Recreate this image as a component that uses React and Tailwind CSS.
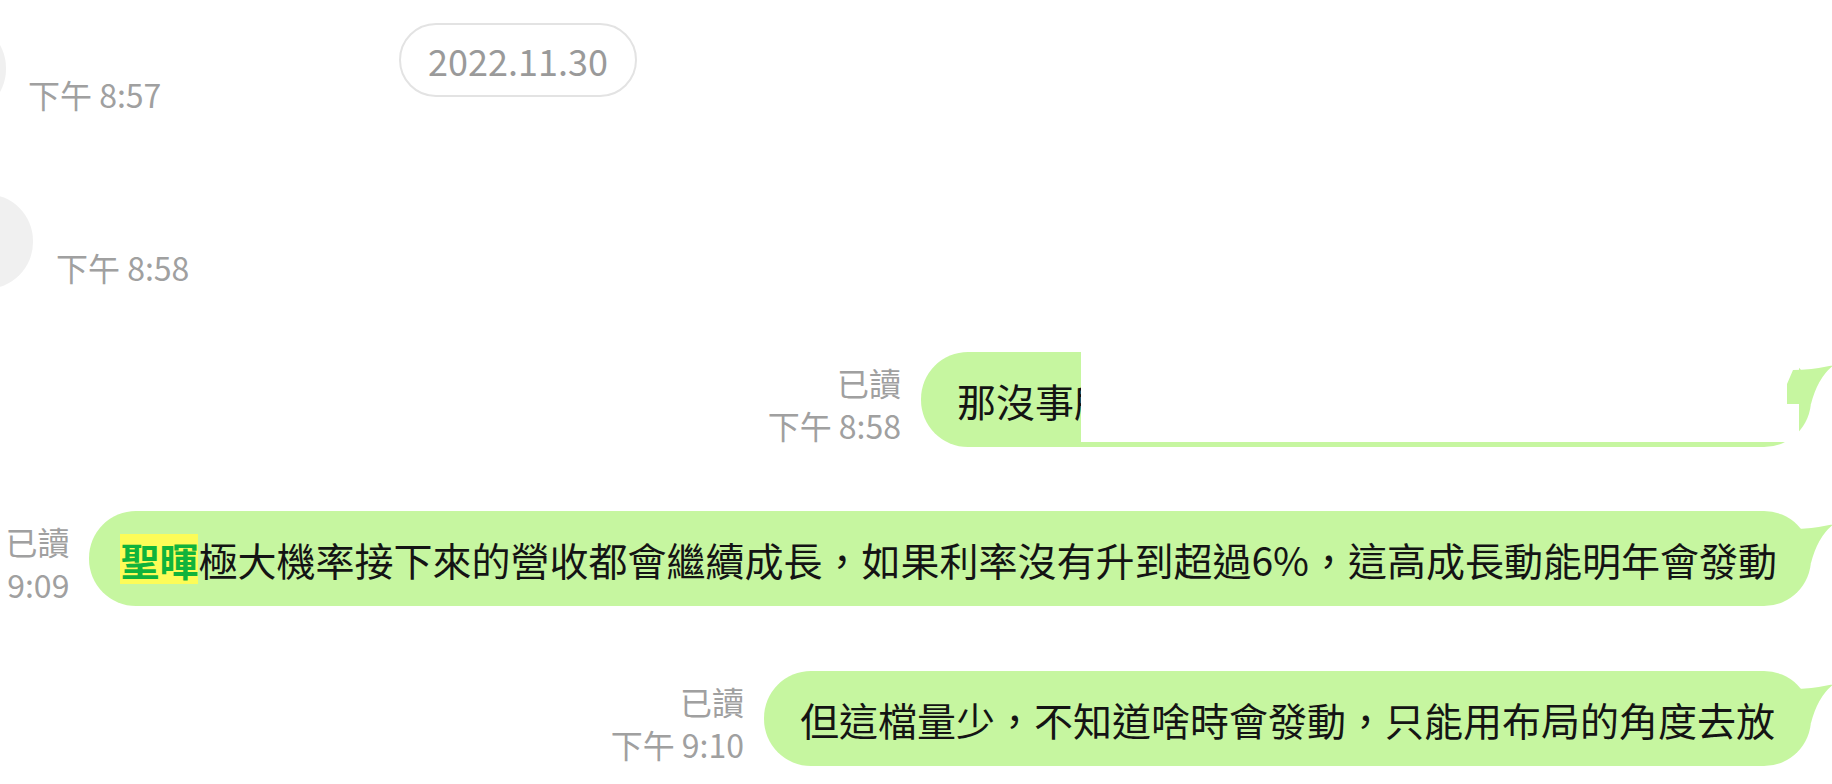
import React from "react";

const GREEN = "#c6f6a0";

function Tail() {
  return (
    <svg
      className="absolute top-0 right-[-22px]"
      width="52"
      height="60"
      viewBox="0 0 52 60"
    >
      <path d="M6 32 L12 18 Q30 18 53 13 Q37 25 30 52 L6 52 Z" fill={GREEN} />
    </svg>
  );
}

function Meta({ lines }) {
  return (
    <div className="flex flex-col items-end mr-[20px] text-[32px] leading-[43px] text-[#a0a0a0] whitespace-nowrap">
      {lines.map((l, i) => (
        <div key={i}>{l}</div>
      ))}
    </div>
  );
}

function OutRow({ meta, children, className = "", bubbleClass = "", overlay = null }) {
  return (
    <div className={"flex justify-end items-end pr-[21px] " + className}>
      <Meta lines={meta} />
      <div
        className={
          "relative h-[95px] rounded-[47px] bg-[#c6f6a0] flex items-center px-[36px] text-[39px] leading-[50px] text-[#141414] whitespace-nowrap " +
          bubbleClass
        }
      >
        {children}
        {overlay}
        <Tail />
      </div>
    </div>
  );
}

export default function App() {
  return (
    <div className="relative w-[1832px] h-[784px] overflow-hidden bg-white font-['Noto_Sans_CJK_TC','Noto_Sans',sans-serif]">
      <div className="flex flex-col pt-[21px]">
        {/* incoming 1 */}
        <div className="flex items-end">
          <div className="h-[95px] w-[300px] -ml-[294px] rounded-[47px] bg-[#f0f0f0] shrink-0" />
          <div className="ml-[22px] text-[32px] leading-[43px] text-[#a0a0a0] whitespace-nowrap">
            下午 8:57
          </div>
        </div>
        {/* incoming 2 */}
        <div className="flex items-end mt-[78px]">
          <div className="h-[95px] w-[300px] -ml-[267px] rounded-[47px] bg-[#f0f0f0] shrink-0" />
          <div className="ml-[23px] text-[32px] leading-[43px] text-[#a0a0a0] whitespace-nowrap">
            下午 8:58
          </div>
        </div>
        {/* outgoing 1 */}
        <OutRow
          className="mt-[63px]"
          meta={["已讀", "下午 8:58"]}
          bubbleClass="w-[890px]"
          overlay={
            <div className="absolute left-[160px] top-[-2px] right-[12px] bottom-[5px] bg-white rounded-br-[6px]" />
          }
        >
          <span>那沒事所</span>
        </OutRow>
        {/* outgoing 2 */}
        <OutRow className="mt-[64px]" meta={["已讀", "9:09"]} bubbleClass="pl-[31px] pr-[34px] text-[38.5px]">
          <span className="inline-block h-[50px] leading-[50px] bg-[#fcfc58] text-[#10b33b] font-bold">
            聖暉
          </span>
          <span>極大機率接下來的營收都會繼續成長，如果利率沒有升到超過6%，這高成長動能明年會發動</span>
        </OutRow>
        {/* outgoing 3 */}
        <OutRow className="mt-[65px]" meta={["已讀", "下午 9:10"]}>
          但這檔量少，不知道啥時會發動，只能用布局的角度去放
        </OutRow>
      </div>

      {/* floating date */}
      <div className="absolute left-[399px] top-[23px] w-[238px] h-[74px] rounded-full border-2 border-[#e3e3e3] bg-white flex items-center justify-center text-[36px] text-[#9a9a9a]">
        2022.11.30
      </div>
    </div>
  );
}
